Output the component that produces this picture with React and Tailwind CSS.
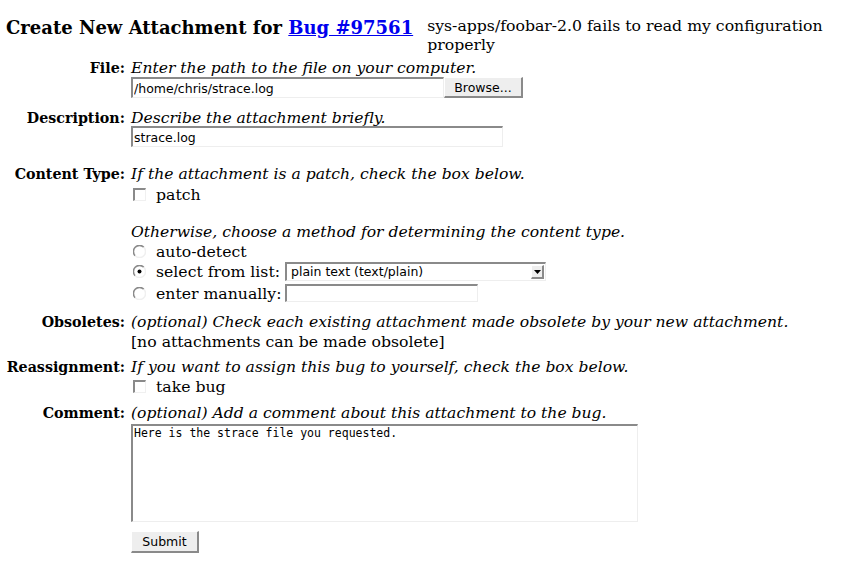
import React from "react";

const serif = { fontFamily: '"DejaVu Serif", serif' };

function Radio({ checked }) {
  return (
    <svg width="13" height="13" viewBox="0 0 13 13" className="inline-block align-middle shrink-0">
      <path d="M2.2 10.8 A6 6 0 0 1 10.8 2.2" fill="none" stroke="#8a8a8a" strokeWidth="1.6" />
      <path d="M10.8 2.2 A6 6 0 0 1 2.2 10.8" fill="none" stroke="#f0f0f0" strokeWidth="1.6" />
      <circle cx="6.5" cy="6.5" r="4.6" fill="#ffffff" />
      {checked && <circle cx="6.5" cy="6.5" r="2" fill="#000000" />}
    </svg>
  );
}

function Checkbox() {
  return (
    <span className="inline-block shrink-0 w-[13px] h-[13px] border-t-2 border-l-2 border-t-[#8a8a8a] border-l-[#8a8a8a] border-b border-r border-b-[#f0f0f0] border-r-[#f0f0f0] bg-white align-middle" />
  );
}

function Row({ label, children, className = "" }) {
  return (
    <div className={"grid grid-cols-[125px_1fr] gap-x-[6px] " + className}>
      <div className="text-right text-black text-[14.25px] font-bold">{label}</div>
      <div className="text-[15.7px]">{children}</div>
    </div>
  );
}

const inputCls =
  "h-[21px] border-t-2 border-l-2 border-t-[#8a8a8a] border-l-[#8a8a8a] border-b border-r border-b-[#eeeeee] border-r-[#eeeeee] bg-white px-[1px] text-[12.5px] text-black leading-[18px] outline-none";
const sans = { fontFamily: '"DejaVu Sans", sans-serif' };
const ital = "italic text-[15.6px]";

export default function App() {
  return (
    <div className="w-[847px] h-[565px] bg-white text-black text-[15.7px] leading-[19px] overflow-hidden" style={serif}>
      <div className="flex items-start pt-[15px]">
        <h3 className="pl-[6px] mt-[3px] text-[18px] leading-[19px] font-bold whitespace-nowrap">
          Create New Attachment for{" "}
          <a href="#" className="text-[#0000ee] underline">Bug #97561</a>
        </h3>
        <div className="ml-[14px] pr-[8px] mt-[1px]">sys-apps/foobar-2.0 fails to read my configuration properly</div>
      </div>

      <Row label="File:" className="mt-[5px]">
        <div className={ital}>Enter the path to the file on your computer.</div>
        <div className="flex items-start -mt-[1px]">
          <input readOnly value="/home/chris/strace.log" className={inputCls + " w-[313px]"} style={sans} />
          <button className="h-[21px] w-[79px] bg-[#eeeeee] border-t border-l border-t-white border-l-white border-b-2 border-r-2 border-b-[#8a8a8a] border-r-[#8a8a8a] text-[12.5px] text-black" style={sans}>
            Browse...
          </button>
        </div>
      </Row>

      <Row label="Description:" className="mt-[11px]">
        <div className={ital}>Describe the attachment briefly.</div>
        <input readOnly value="strace.log" className={inputCls + " w-[372px] h-[20px] block -mt-[2px]"} style={sans} />
      </Row>

      <Row label="Content Type:" className="mt-[18px]">
        <div className={ital}>If the attachment is a patch, check the box below.</div>
        <div className="flex items-center h-[20px] pl-[2px] gap-[10px]">
          <Checkbox />
          <span>patch</span>
        </div>
        <div className="h-[19px]" />
        <div className={ital}>Otherwise, choose a method for determining the content type.</div>
        <div className="flex items-center h-[19px] pl-[2px] gap-[10px]">
          <Radio />
          <span>auto-detect</span>
        </div>
        <div className="flex items-center h-[21px] pl-[2px]">
          <Radio checked />
          <span className="ml-[10px] whitespace-nowrap">select from list:</span>
          <div className="ml-[5px] shrink-0 h-[19px] w-[261px] flex items-stretch border-t-2 border-l-2 border-t-[#8a8a8a] border-l-[#8a8a8a] border-b border-r border-b-[#eeeeee] border-r-[#eeeeee] bg-white">
            <span className="flex-1 pl-[4px] text-[12.5px] leading-[16px]" style={sans}>plain text (text/plain)</span>
            <span className="w-[13px] my-[1px] mr-[1px] bg-[#eeeeee] border-t border-l border-t-white border-l-white border-b-2 border-r-2 border-b-[#8a8a8a] border-r-[#8a8a8a] flex items-center justify-center">
              <svg width="7" height="4" viewBox="0 0 7 4"><path d="M0 0H7L3.5 4Z" fill="#000" /></svg>
            </span>
          </div>
        </div>
        <div className="flex items-center h-[22px] pl-[2px]">
          <Radio />
          <span className="ml-[10px] whitespace-nowrap">enter manually:</span>
          <span className="ml-[4px] shrink-0 inline-block h-[18px] w-[193px] border-t-2 border-l-2 border-t-[#8a8a8a] border-l-[#8a8a8a] border-b border-r border-b-[#eeeeee] border-r-[#eeeeee] bg-white" />
        </div>
      </Row>

      <Row label="Obsoletes:" className="mt-[9px]">
        <div className={ital}>(optional) Check each existing attachment made obsolete by your new attachment.</div>
        <div>[no attachments can be made obsolete]</div>
      </Row>

      <Row label="Reassignment:" className="mt-[7px]">
        <div className={ital}>If you want to assign this bug to yourself, check the box below.</div>
        <div className="flex items-center h-[19px] pl-[2px] gap-[10px]">
          <Checkbox />
          <span>take bug</span>
        </div>
      </Row>

      <Row label="Comment:" className="mt-[8px]">
        <div className={ital}>(optional) Add a comment about this attachment to the bug.</div>
        <textarea
          readOnly
          value="Here is the strace file you requested."
          className="block mt-[1px] w-[507px] h-[98px] resize-none border-t-2 border-l-2 border-t-[#8a8a8a] border-l-[#8a8a8a] border-b border-r border-b-[#eeeeee] border-r-[#eeeeee] bg-white px-[1px] text-[11.5px] leading-[14px] outline-none"
          style={{ fontFamily: '"DejaVu Sans Mono", monospace' }}
        />
        <button className="mt-[9px] h-[22px] w-[68px] bg-[#eeeeee] border-t border-l border-t-white border-l-white border-b-2 border-r-2 border-b-[#8a8a8a] border-r-[#8a8a8a] text-[12.5px] text-black" style={sans}>
          Submit
        </button>
      </Row>
    </div>
  );
}
